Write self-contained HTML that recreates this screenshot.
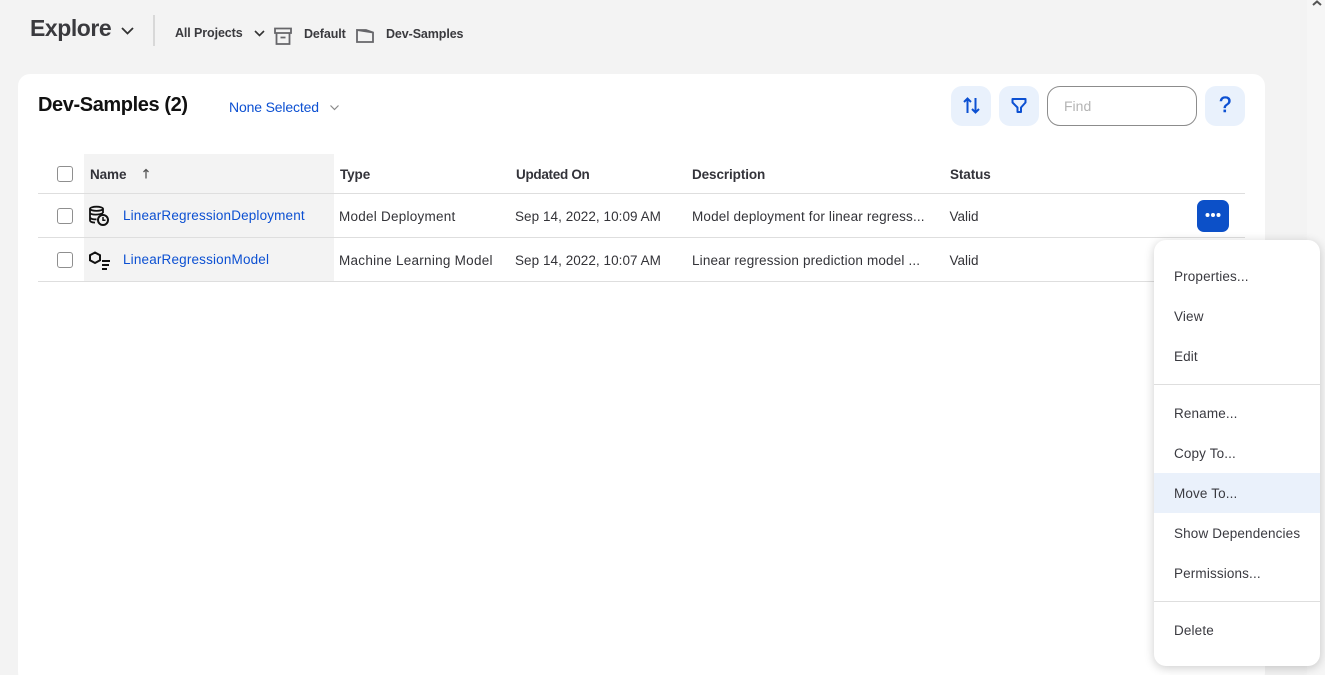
<!DOCTYPE html>
<html><head><meta charset="utf-8"><style>
html,body{margin:0;padding:0;width:1325px;height:675px;overflow:hidden;background:#f3f3f3}
body{position:relative;font-family:"Liberation Sans",sans-serif;color:#2f2f33}
.t{position:absolute;white-space:nowrap;font-size:13.5px;line-height:18px;color:#333338}
.b{font-weight:bold}
.h{position:absolute;white-space:nowrap;font-size:13.5px;line-height:18px;font-weight:bold;top:166px;color:#33333a;letter-spacing:-.1px}
.a{color:#0c50d2}
.cb{position:absolute;left:57px;width:14px;height:14px;border:1px solid #8f8f8f;border-radius:3px;background:#fff}
.ln{position:absolute;left:38px;width:1207px;height:1px;background:#dedede}
.ib{position:absolute;top:86px;width:40px;height:40px;border-radius:11px;background:#e9f1fc}
svg{position:absolute;overflow:visible}
.m{position:absolute;left:20px;white-space:nowrap;font-size:13.5px;line-height:18px;color:#3a3a40;letter-spacing:.14px}
</style></head><body>
<div style="position:absolute;left:1307px;top:0;width:18px;height:675px;background:#f6f6f6"></div>
<svg style="left:1312px;top:0" width="10" height="6" fill="none" stroke="#555" stroke-width="2"><path d="M1 5 L5 1.500 L9 5"/></svg>

<div class="t b" style="left:30px;top:13px;font-size:23px;line-height:30px;color:#3a3a3e;letter-spacing:-.45px">Explore</div>
<svg style="left:121px;top:27px" width="13" height="8" fill="none" stroke="#333" stroke-width="1.800"><path d="M1 1 L6.500 6.500 L12 1"/></svg>
<div style="position:absolute;left:153px;top:15px;width:2px;height:31px;background:#d8d8d8"></div>
<div class="t b" style="left:175px;top:24px;font-size:12.500px;letter-spacing:-.1px;color:#3a3a3e">All Projects</div>
<svg style="left:254px;top:30px" width="11" height="7" fill="none" stroke="#333" stroke-width="1.600"><path d="M1 1 L5.500 5.500 L10 1"/></svg>
<svg style="left:274px;top:27px" width="18" height="18" fill="none" stroke="#66666a" stroke-width="1.800"><path d="M1 1.500H17V6H1Z M2.500 6V17H15.500V6 M6.500 10.500H11.500"/></svg>
<div class="t b" style="left:304px;top:25px;font-size:12.500px;letter-spacing:-.1px;color:#3a3a3e">Default</div>
<svg style="left:356px;top:29px" width="18" height="14" fill="none" stroke="#66666a" stroke-width="1.800"><path d="M1 1V13H17V3.500L1 1Z M1 1H10L17 3.500"/></svg>
<div class="t b" style="left:386px;top:25px;font-size:12.500px;letter-spacing:-.1px;color:#3a3a3e">Dev-Samples</div>

<div style="position:absolute;left:18px;top:74px;width:1247px;height:610px;background:#fff;border-radius:12px"></div>
<div class="t b" style="left:38px;top:93px;font-size:20px;line-height:24px;color:#111;letter-spacing:-.4px">Dev-Samples (2)</div>
<div class="t a" style="left:229px;top:98px;font-size:14px;letter-spacing:-.15px">None Selected</div>
<svg style="left:330px;top:105px" width="9" height="6" fill="none" stroke="#8a8a8a" stroke-width="1.200"><path d="M.5 .5 L4.500 4.500 L8.500 .5"/></svg>

<div class="ib" style="left:951px"></div>
<svg style="left:963px;top:97px" width="17" height="17" fill="none" stroke="#0c50d2" stroke-width="2"><path d="M4.500 16V1.500 M1 5 L4.500 1.500 L8 5 M12.500 1V15.500 M9 12 L12.500 15.500 L16 12"/></svg>
<div class="ib" style="left:999px"></div>
<svg style="left:1011px;top:97px" width="16" height="17" fill="none" stroke="#0c50d2" stroke-width="2" stroke-linejoin="round"><path d="M1.500 2H14.500V5.500L10 10.500V15H6.500V10.500L1.500 5.500Z"/></svg>
<div style="position:absolute;left:1047px;top:86px;width:148px;height:38px;border:1px solid #8c8c8c;border-radius:13px;background:#fff"></div>
<div class="t" style="left:1064px;top:97px;font-size:14px;color:#b4b4b4">Find</div>
<div class="ib" style="left:1205px"></div>
<div class="t" style="left:1219px;top:93px;font-size:22px;line-height:24px;color:#0c50d2;-webkit-text-stroke:.5px #0c50d2">?</div>

<div style="position:absolute;left:84px;top:154px;width:250px;height:127px;background:#f3f3f3"></div>
<div class="cb" style="top:166px"></div>
<div class="h" style="left:90px">Name</div>
<svg style="left:142px;top:168px" width="8" height="11" fill="none" stroke="#555" stroke-width="1.300"><path d="M4 10.500V1.500 M1.500 4 L4 1.500 L6.500 4"/></svg>
<div class="h" style="left:340px">Type</div>
<div class="h" style="left:516px;letter-spacing:-.3px">Updated On</div>
<div class="h" style="left:692px">Description</div>
<div class="h" style="left:950px">Status</div>
<div class="ln" style="top:193px"></div>

<div class="cb" style="top:208px"></div>
<svg style="left:89px;top:206px" width="20" height="20" fill="none" stroke="#111" stroke-width="1.800"><ellipse cx="7.500" cy="2.800" rx="6.500" ry="2.100"/><path d="M1 2.800V14.500C1 15.700 3 16.500 6 16.600 M14 2.800V7 M1 7C2 9 10 9.300 14 7 M1 11.500C2 13 5 13.500 7.500 13.300"/><circle cx="14" cy="14" r="5" stroke-width="2"/><path d="M14 11V14.300H16.500" stroke-width="1.500"/></svg>
<div class="t a" style="left:123px;top:207px;font-size:13.500px;letter-spacing:.15px">LinearRegressionDeployment</div>
<div class="t" style="left:339px;top:208px;letter-spacing:.25px">Model Deployment</div>
<div class="t" style="left:515px;top:208px;letter-spacing:.05px">Sep 14, 2022, 10:09 AM</div>
<div class="t" style="left:692px;top:208px;letter-spacing:.16px">Model deployment for linear regress...</div>
<div class="t" style="left:949.500px;top:208px">Valid</div>
<div style="position:absolute;left:1197px;top:200px;width:32px;height:32px;border-radius:7px;background:#0c50c8"></div>
<svg style="left:1205px;top:212px" width="16" height="6" fill="#fff"><circle cx="2.500" cy="3" r="2"/><circle cx="8" cy="3" r="2"/><circle cx="13.500" cy="3" r="2"/></svg>
<div class="ln" style="top:237px"></div>

<div class="cb" style="top:252px"></div>
<svg style="left:89px;top:251px" width="21" height="20" fill="none" stroke="#111" stroke-width="2"><path d="M6 1.500 L11 4.200V9.300L6 12L1 9.300V4.200Z"/><path d="M13 10H21 M13 14H20 M13 18H18"/></svg>
<div class="t a" style="left:123px;top:251px;font-size:13.500px;letter-spacing:.17px">LinearRegressionModel</div>
<div class="t" style="left:339px;top:252px;letter-spacing:.27px">Machine Learning Model</div>
<div class="t" style="left:515px;top:252px;letter-spacing:.05px">Sep 14, 2022, 10:07 AM</div>
<div class="t" style="left:692px;top:252px;letter-spacing:.16px">Linear regression prediction model ...</div>
<div class="t" style="left:949.500px;top:252px">Valid</div>
<div class="ln" style="top:281px"></div>

<div style="position:absolute;left:1154px;top:240px;width:166px;height:426px;background:#fff;border-radius:12px;box-shadow:0 2px 10px rgba(0,0,0,.2)">
<div class="m" style="top:28px">Properties...</div>
<div class="m" style="top:68px">View</div>
<div class="m" style="top:108px">Edit</div>
<div style="position:absolute;left:0;top:144px;width:166px;height:1px;background:#dedede"></div>
<div class="m" style="top:165px">Rename...</div>
<div class="m" style="top:205px">Copy To...</div>
<div style="position:absolute;left:0;top:233px;width:166px;height:40px;background:#eaf1fb"></div>
<div class="m" style="top:245px">Move To...</div>
<div class="m" style="top:285px">Show Dependencies</div>
<div class="m" style="top:325px">Permissions...</div>
<div style="position:absolute;left:0;top:361px;width:166px;height:1px;background:#dedede"></div>
<div class="m" style="top:382px">Delete</div>
</div>
</body></html>
